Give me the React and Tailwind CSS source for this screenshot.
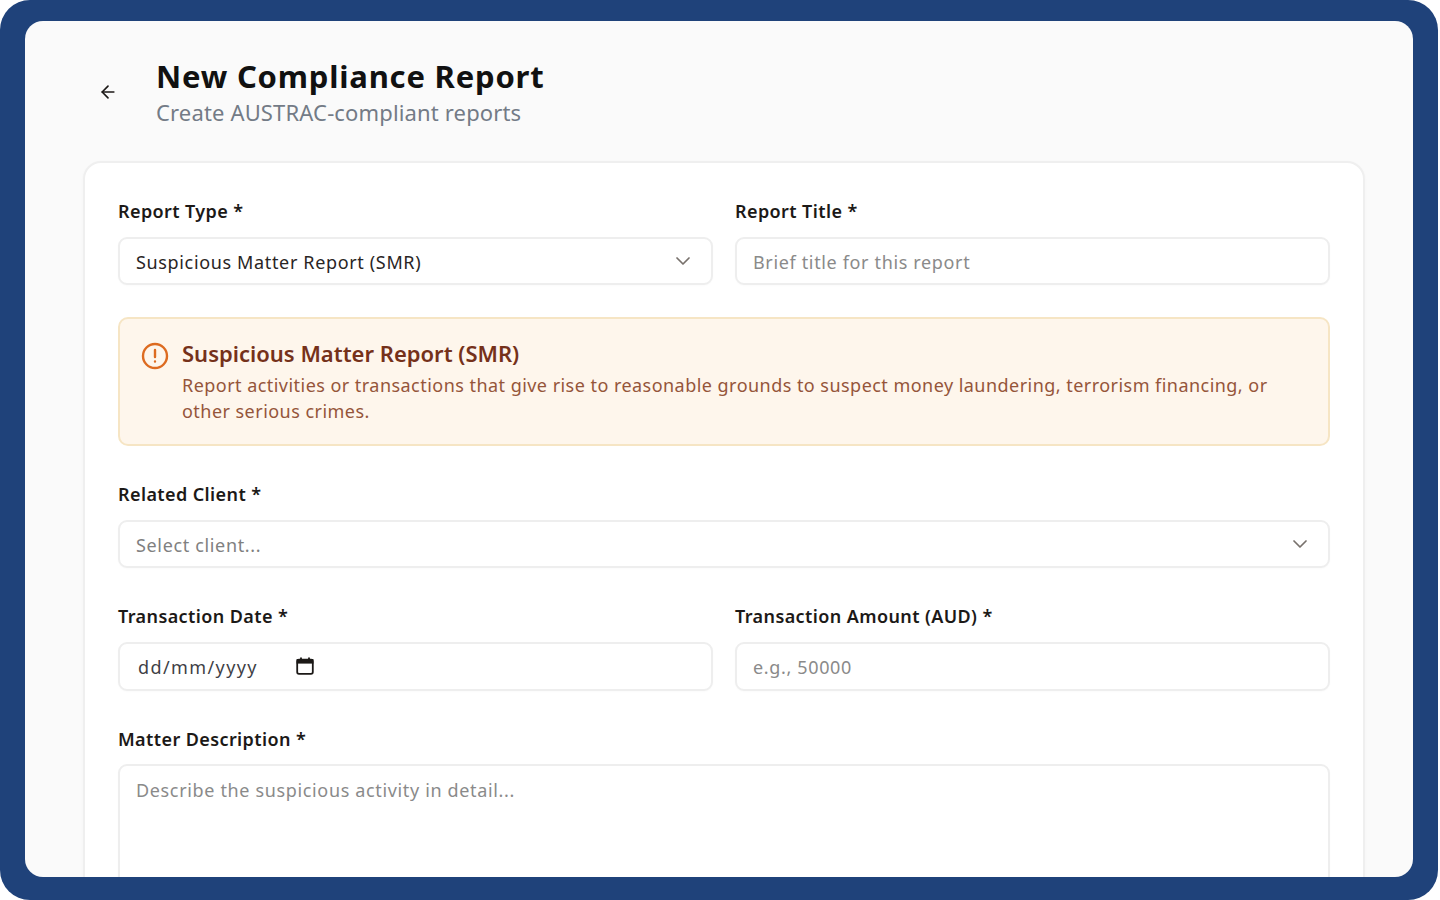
import { ArrowLeft, ChevronDown } from 'lucide-react';

const labelCls = 'block text-[18px] leading-[24px] font-semibold text-[#1c1917] tracking-[0.4px] mb-[14px]';
const boxBase = 'w-full h-[48px] px-[16px] flex items-center bg-white border-2 border-[#eeeeee] rounded-[9px] shadow-[0_1px_2px_rgba(0,0,0,0.02)] text-[18px] tracking-[0.65px] outline-none placeholder:text-[#8a8a8a]';
const boxCls = `${boxBase} pt-[2px]`;

const Field = ({ label, children }) => (
  <div>
    <label className={labelCls}>{label}</label>
    {children}
  </div>
);

const SelectBox = ({ value, muted }) => (
  <div className={`${boxCls} justify-between ${muted ? 'text-[#808080]' : 'text-[#292524]'}`}>
    <span>{value}</span>
    <ChevronDown className="w-[24px] h-[24px] mt-[-2px] text-[#78716c]" strokeWidth={1.75} />
  </div>
);

const CalendarIcon = () => (
  <svg viewBox="0 0 18 18" className="w-[18px] h-[18px] text-[#1c1917] ml-[38px] mb-[3px]" fill="none" stroke="currentColor">
    <rect x="1.2" y="2.6" width="15.6" height="14.2" rx="1.8" strokeWidth="1.8" />
    <rect x="1.2" y="2.6" width="15.6" height="3.4" fill="currentColor" strokeWidth="1.2" />
    <path d="M5 0.6v2.6M13 0.6v2.6" strokeWidth="1.8" />
  </svg>
);

export default function App() {
  return (
    <div className="w-[1440px] h-[900px] bg-white" style={{ fontFamily: '"Noto Sans", sans-serif' }}>
      <div className="w-[1438px] h-[900px] bg-[#1f427a] rounded-[30px] pt-[21px] pb-[23px] px-[25px]">
        <div className="h-full bg-[#fafafa] rounded-[18px] overflow-hidden pl-[58px] pr-[48px] pt-[33px]">
          <div className="flex items-center h-[74px] mb-[33px]">
            <ArrowLeft className="w-[20px] h-[20px] text-[#1c1917] ml-[15px] mr-[38px] mt-[2px]" strokeWidth={2} />
            <div>
              <h1 className="text-[31px] leading-[42px] font-bold text-[#111111] tracking-[0.8px]">New Compliance Report</h1>
              <p className="text-[22px] leading-[30px] text-[#737b86] tracking-[0.15px]">Create AUSTRAC-compliant reports</p>
            </div>
          </div>

          <div className="bg-white border-2 border-[#efefef] rounded-[18px] shadow-[0_1px_3px_rgba(0,0,0,0.03)] px-[33px] pt-[36px] pb-[40px]">
            <div className="grid grid-cols-2 gap-x-[22px]">
              <Field label="Report Type *">
                <SelectBox value="Suspicious Matter Report (SMR)" />
              </Field>
              <Field label="Report Title *">
                <input className={boxCls} placeholder="Brief title for this report" />
              </Field>
            </div>

            <div className="mt-[32px] h-[129px] bg-[#fef6ec] border-2 border-[#f6e5c4] rounded-[10px] pl-[21px] pr-[40px] pt-[19px] flex gap-[13px]">
              <svg viewBox="0 0 28 28" className="w-[28px] h-[28px] shrink-0 mt-[4px] text-[#dd6b20]" fill="none" stroke="currentColor" strokeWidth="2.4" strokeLinecap="round">
                <circle cx="14" cy="14" r="12" />
                <path d="M14 8v7M14 19.4v.1" />
              </svg>
              <div>
                <h3 className="text-[22px] leading-[30px] font-semibold text-[#75311a]">Suspicious Matter Report (SMR)</h3>
                <p className="text-[18px] leading-[26px] text-[#95553a] mt-[4px] tracking-[0.46px]">
                  Report activities or transactions that give rise to reasonable grounds to suspect money laundering, terrorism financing, or other serious crimes.
                </p>
              </div>
            </div>

            <div className="mt-[36px]">
              <Field label="Related Client *">
                <SelectBox value="Select client..." muted />
              </Field>
            </div>

            <div className="mt-[36px] grid grid-cols-2 gap-x-[22px]">
              <Field label="Transaction Date *">
                <div className={`${boxCls} min-h-[49px] text-[#3f3f46]`}>
                  <span className="tracking-[1.4px] ml-[2px]">dd/mm/yyyy</span>
                  <CalendarIcon />
                </div>
              </Field>
              <Field label="Transaction Amount (AUD) *">
                <input className={`${boxBase} min-h-[49px]`} placeholder="e.g., 50000" />
              </Field>
            </div>

            <div className="mt-[36px]">
              <Field label="Matter Description *">
                <textarea className={`${boxBase} h-[160px] pt-[11px] -mt-[1px] block resize-none`} placeholder="Describe the suspicious activity in detail..." />
              </Field>
            </div>
          </div>
        </div>
      </div>
    </div>
  );
}
